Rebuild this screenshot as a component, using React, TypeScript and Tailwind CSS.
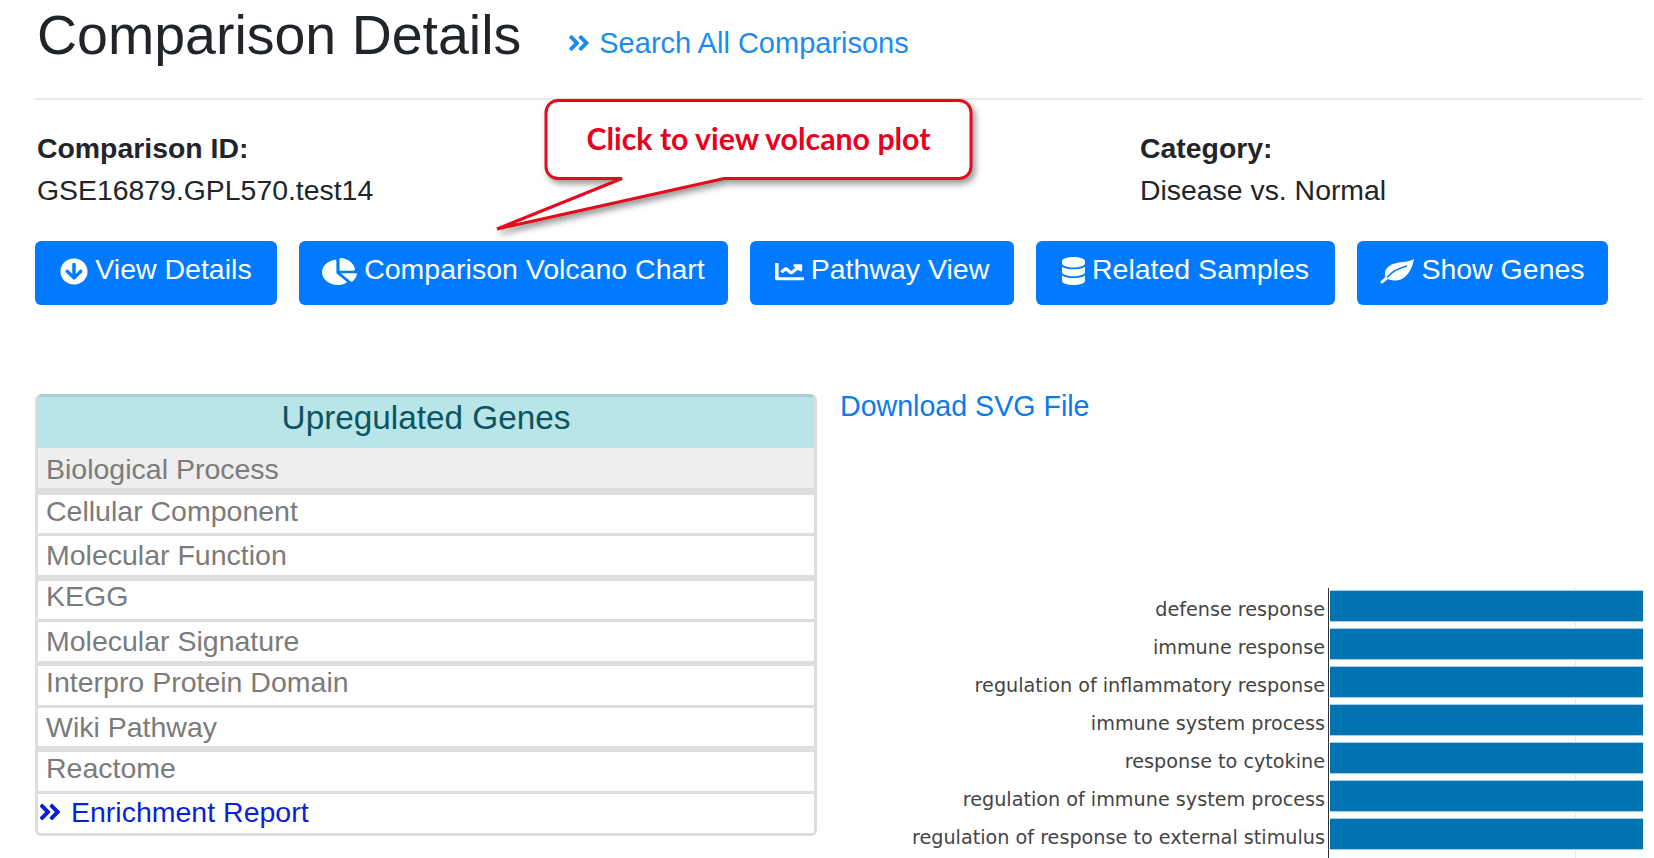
import { FaAngleDoubleRight, FaArrowCircleDown, FaChartLine, FaChartPie, FaDatabase } from 'react-icons/fa';

// the stock leaf has no vein, so this one is drawn by hand
function LeafIcon({ className }: { className?: string }) {
  return (
    <svg viewBox="0 0 34 25" className={className}>
      <path
        d="M34 0 C28 4 17 2 10 6.500 C5 10 4 14 5.500 18 L0.500 22.500 C0 24 1.500 25 3 24 L8 20 C17 24 30 21 34 0 Z"
        fill="#ffffff"
      />
      <path d="M7 18.500 C12 12 19 9 27 7" fill="none" stroke="#007bff" strokeWidth="1.300" />
    </svg>
  );
}

const buttons = [
  { icon: FaArrowCircleDown, label: 'View Details', width: 'w-[242px]', iconSize: 'w-[28px] h-[27px]' },
  { icon: FaChartPie, label: 'Comparison Volcano Chart', width: 'w-[429px]', iconSize: 'w-[35px] h-[27px]' },
  { icon: FaChartLine, label: 'Pathway View', width: 'w-[264px]', iconSize: 'w-[29px] h-[23px]' },
  { icon: FaDatabase, label: 'Related Samples', width: 'w-[299px]', iconSize: 'w-[23px] h-[28px]' },
  { icon: LeafIcon, label: 'Show Genes', width: 'w-[251px]', iconSize: 'w-[34px] h-[25px]' },
];

// the text sits unevenly in these rows, hence a line height per row
const rows = [
  { label: 'Biological Process', className: 'h-[40px] bg-[#eeeeee] leading-[42px]', border: 'h-[7px]' },
  { label: 'Cellular Component', className: 'h-[38px] bg-white leading-[32px]', border: 'h-[3px]' },
  { label: 'Molecular Function', className: 'h-[39px] bg-white leading-[38px]', border: 'h-[6px]' },
  { label: 'KEGG', className: 'h-[38px] bg-white leading-[30px]', border: 'h-[3px]' },
  { label: 'Molecular Signature', className: 'h-[39px] bg-white leading-[38px]', border: 'h-[5px]' },
  { label: 'Interpro Protein Domain', className: 'h-[39px] bg-white leading-[32px]', border: 'h-[3px]' },
  { label: 'Wiki Pathway', className: 'h-[38px] bg-white leading-[38px]', border: 'h-[6px]' },
  { label: 'Reactome', className: 'h-[39px] bg-white leading-[32px]', border: 'h-[3px]' },
];

const terms = [
  'defense response',
  'immune response',
  'regulation of inflammatory response',
  'immune system process',
  'response to cytokine',
  'regulation of immune system process',
  'regulation of response to external stimulus',
];

function Callout() {
  return (
    <div className="absolute left-[490px] top-[96px] w-[490px] h-[140px]">
      <svg width="490" height="140" viewBox="0 0 490 140" className="drop-shadow-[3px_4px_3px_rgba(0,0,0,0.4)]">
        <path
          d="M68 4.5 H469 a12 12 0 0 1 12 12 V70.500 a12 12 0 0 1 -12 12 H234 L7 133 L132 82.500 H68 a12 12 0 0 1 -12 -12 V16.500 a12 12 0 0 1 12 -12 Z"
          fill="#ffffff"
          stroke="#e50a1e"
          strokeWidth="3"
        />
      </svg>
      <div className="absolute left-[56px] top-[4px] w-[425px] h-[78px] flex items-center justify-center font-['Lato',sans-serif] font-bold text-[30.300px] text-[#e8001c]">
        Click to view volcano plot
      </div>
    </div>
  );
}

export default function App() {
  return (
    <div className="relative w-[1654px] h-[858px] overflow-hidden bg-white pl-[35px] pr-[11px] font-['Liberation_Sans',Arial,sans-serif] text-[#212529]">
      <div className="flex items-start h-[98px]">
        <h1 className="text-[55.500px] leading-[70px] ml-[2px]">Comparison Details</h1>
        <a className="flex items-center ml-[47px] mt-[24px] text-[29px] leading-[38px] text-[#1a8cf0]">
          <FaAngleDoubleRight className="w-[22px] h-[28px] mr-[9px]" />
          Search All Comparisons
        </a>
      </div>
      <div className="h-[2px] bg-[#e9e9e9]" />

      <div className="flex h-[141px] pt-[28px] text-[28.400px] leading-[41px]">
        <div className="w-[1105px] pl-[2px]">
          <div className="font-bold mb-[1px]">Comparison ID:</div>
          <div>GSE16879.GPL570.test14</div>
        </div>
        <div>
          <div className="font-bold mb-[1px]">Category:</div>
          <div>Disease vs. Normal</div>
        </div>
      </div>

      <div className="flex gap-[22px]">
        {buttons.map((btn) => {
          const Icon = btn.icon;
          return (
            <button
              key={btn.label}
              className={`${btn.width} h-[64px] rounded-[6px] bg-[#007bff] text-white text-[28.500px] flex items-center justify-center gap-[7px] pb-[4px]`}
            >
              <Icon className={btn.iconSize} preserveAspectRatio="none" />
              <span className="pb-[4px]">{btn.label}</span>
            </button>
          );
        })}
      </div>

      <div className="flex mt-[89px]">
        <div className="w-[782px] h-[442px] shrink-0 rounded-[6px] border-x-[3px] border-b-[3px] border-[#dddddd] overflow-hidden">
          <div className="h-[54px] -mx-[3px] bg-[#b8e5e8] border-t-[3px] border-x-[3px] border-[#a9cfd3] rounded-t-[6px] text-center text-[33.300px] leading-[42px] text-[#0c5460]">
            Upregulated Genes
          </div>
          {rows.map((row) => (
            <div key={row.label}>
              <div className={`${row.className} pl-[8px] text-[28.500px] text-[#7b7b7b]`}>{row.label}</div>
              <div className={`${row.border} bg-[#dddddd]`} />
            </div>
          ))}
          <a className="flex items-center h-[38px] pb-[2px] text-[28.500px] text-[#0a1fdc]">
            <FaAngleDoubleRight className="w-[24px] h-[26px] mr-[9px]" />
            Enrichment Report
          </a>
        </div>

        <div className="flex-1 min-w-0 pl-[23px]">
          <a className="block text-[28.600px] leading-[24px] text-[#0a7bea]">Download SVG File</a>
          <div className="relative mt-[170px] flex flex-col gap-[8px] pt-[3px]">
            <div className="absolute left-[488px] top-0 w-px h-[300px] bg-[#333333]" />
            <div className="absolute left-[735px] top-0 w-px h-[300px] bg-[#e8e8e8]" />
            {terms.map((term) => (
              <div key={term} className="relative flex items-center h-[30px] shrink-0">
                <div className="w-[485px] pt-[9px] text-right whitespace-nowrap font-['DejaVu_Sans',sans-serif] text-[19.200px] text-[#444444]">
                  {term}
                </div>
                <div className="ml-[5px] flex-1 h-[32px] bg-[#0073b0] border-y border-[#a9cfe6]" />
              </div>
            ))}
          </div>
        </div>
      </div>

      <Callout />
    </div>
  );
}
